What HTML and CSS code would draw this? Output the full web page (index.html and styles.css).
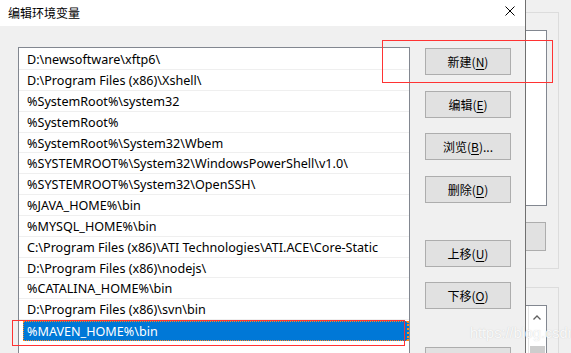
FILE: index.html
```html
<!DOCTYPE html>
<html lang="zh-CN">
<head>
<meta charset="utf-8">
<title>编辑环境变量</title>
<link rel="stylesheet" href="styles.css">
</head>
<body>
<div class="screen">
  <div class="dialog">
    <div class="titlebar">
      <span class="title">编辑环境变量</span>
      <svg class="close" width="10" height="10" viewBox="0 0 10 10"><path d="M0.5 0.5 L9.5 9.5 M9.5 0.5 L0.5 9.5" stroke="#000" stroke-width="1" fill="none"/></svg>
    </div>
    <div class="content">
      <div class="list">
        <div class="row">D:\newsoftware\xftp6\</div>
        <div class="row">D:\Program Files (x86)\Xshell\</div>
        <div class="row">%SystemRoot%\system32</div>
        <div class="row">%SystemRoot%</div>
        <div class="row">%SystemRoot%\System32\Wbem</div>
        <div class="row">%SYSTEMROOT%\System32\WindowsPowerShell\v1.0\</div>
        <div class="row">%SYSTEMROOT%\System32\OpenSSH\</div>
        <div class="row">%JAVA_HOME%\bin</div>
        <div class="row">%MYSQL_HOME%\bin</div>
        <div class="row">C:\Program Files (x86)\ATI Technologies\ATI.ACE\Core-Static</div>
        <div class="row">D:\Program Files (x86)\nodejs\</div>
        <div class="row">%CATALINA_HOME%\bin</div>
        <div class="row">D:\Program Files (x86)\svn\bin</div>
        <div class="row-edit"><span class="edit">%MAVEN_HOME%\bin</span></div>
      </div>
      <div class="buttons">
        <button class="btn">新建(<u>N</u>)</button>
        <button class="btn gap16">编辑(<u>E</u>)</button>
        <button class="btn gap15">浏览(<u>B</u>)...</button>
        <button class="btn gap16">删除(<u>D</u>)</button>
        <button class="btn gap37">上移(<u>U</u>)</button>
        <button class="btn gap15">下移(<u>O</u>)</button>
        <button class="btn gap38"></button>
      </div>
    </div>
  </div>
  <div class="bgwin">
    <div class="group group-a">
      <div class="wbox wbox-a"></div>
      <div class="gbtn"></div>
    </div>
    <div class="group group-b">
      <div class="wbox wbox-b">
        <div class="sbar">
          <svg class="sarrow" width="8" height="5" viewBox="0 0 8 5"><path d="M0.5 4.5 L4 1 L7.5 4.5" stroke="#606060" stroke-width="1.3" fill="none"/></svg>
          <div class="thumb"></div>
        </div>
      </div>
    </div>
  </div>
  <div class="mark mark-top"></div>
  <div class="mark mark-bottom"></div>
  <div class="watermark">https://blog.csdn.net/</div>
</div>
</body>
</html>
```
FILE: styles.css
```css
* { box-sizing: border-box; }
html, body { margin: 0; padding: 0; }
body {
  width: 571px;
  height: 353px;
  overflow: hidden;
  background: #f0f0f0;
  font-family: "Noto Sans", "Noto Sans CJK SC", sans-serif;
  font-size: 12px;
  color: #000;
}
.screen {
  position: relative;
  display: flex;
  width: 571px;
  height: 353px;
  overflow: hidden;
}
.dialog {
  width: 526px;
  height: 353px;
  flex: none;
  overflow: hidden;
  border-right: 1px solid #707070;
  background: #f0f0f0;
  display: flex;
  flex-direction: column;
}
.titlebar {
  flex: none;
  height: 26px;
  background: #fff;
  display: flex;
  align-items: center;
  justify-content: space-between;
  padding: 0 10px 2px 8px;
}
.title {
  font-family: "Noto Sans CJK SC", sans-serif;
  font-size: 12px;
}
.close { display: block; margin-top: -2px; }
.content {
  flex: none;
  display: flex;
  align-items: flex-start;
  padding: 21px 0 0 18px;
}
.list {
  width: 392px;
  height: 320px;
  background: #fff;
  border: 1px solid #828790;
  border-bottom: none;
  padding-top: 1.15px;
}
.row {
  height: 20.85px;
  border-bottom: 1px solid #efefef;
  padding: 2px 0 0 8px;
  font-size: 12.6px;
  line-height: 18px;
  white-space: nowrap;
  overflow: hidden;
}
.row-edit {
  padding: 1px 0 0 4px;
}
.edit {
  display: block;
  height: 20px;
  background: #0078d7;
  color: #fff;
  border: 1px dotted #ff8a1c;
  border-right-width: 2px;
  padding: 1px 0 0 3px;
  font-size: 12.6px;
  line-height: 17px;
}
.buttons {
  display: flex;
  flex-direction: column;
  margin-left: 15px;
  padding-top: 1px;
}
.btn {
  flex: none;
  width: 86px;
  height: 27px;
  padding: 0;
  background: #e1e1e1;
  border: 1px solid #adadad;
  font-family: "Noto Sans CJK SC", sans-serif;
  font-size: 12px;
  color: #000;
  line-height: 1;
}
.btn u { text-underline-offset: 2px; }
.gap15 { margin-top: 15px; }
.gap16 { margin-top: 16px; }
.gap37 { margin-top: 37px; }
.gap38 { margin-top: 38px; }

.bgwin {
  flex: 1;
  padding-top: 12px;
  background: #f0f0f0;
}
.group {
  width: 33px;
  border-top: 1px solid #dcdcdc;
  border-right: 1px solid #dcdcdc;
  padding-top: 17px;
}
.group-a {
  height: 257px;
  border-bottom: 1px solid #dcdcdc;
}
.group-b {
  margin-top: 18px;
  height: 80px;
}
.wbox {
  width: 21px;
  background: #fff;
  border: 1px solid #828790;
  border-left: none;
}
.wbox-a { height: 176px; }
.wbox-b { height: 60px; border-bottom: none; padding-left: 2px; }
.sbar {
  width: 17px;
  height: 60px;
  border-left: 1px solid #e6e6e6;
  display: flex;
  flex-direction: column;
  align-items: center;
  padding-top: 9px;
}
.sarrow { display: block; }
.thumb {
  width: 15px;
  height: 20px;
  margin-top: 26px;
  background: #cdcdcd;
}
.gbtn {
  width: 20px;
  height: 29px;
  margin-top: 16px;
  background: #e1e1e1;
  border: 1px solid #adadad;
  border-left: none;
}

.mark {
  position: absolute;
  border: 1px solid #f33;
}
.mark-top { left: 382px; top: 40px; width: 171px; height: 43px; }
.mark-bottom { left: 12px; top: 320px; width: 393px; height: 26px; }
.watermark {
  position: absolute;
  left: 470px;
  top: 326px;
  font-family: "Liberation Sans", sans-serif;
  font-size: 14.5px;
  line-height: 14.5px;
  color: rgba(255, 255, 255, 0.9);
  text-shadow: 0 0 1px rgba(120, 120, 120, 0.35);
  white-space: nowrap;
}
```
